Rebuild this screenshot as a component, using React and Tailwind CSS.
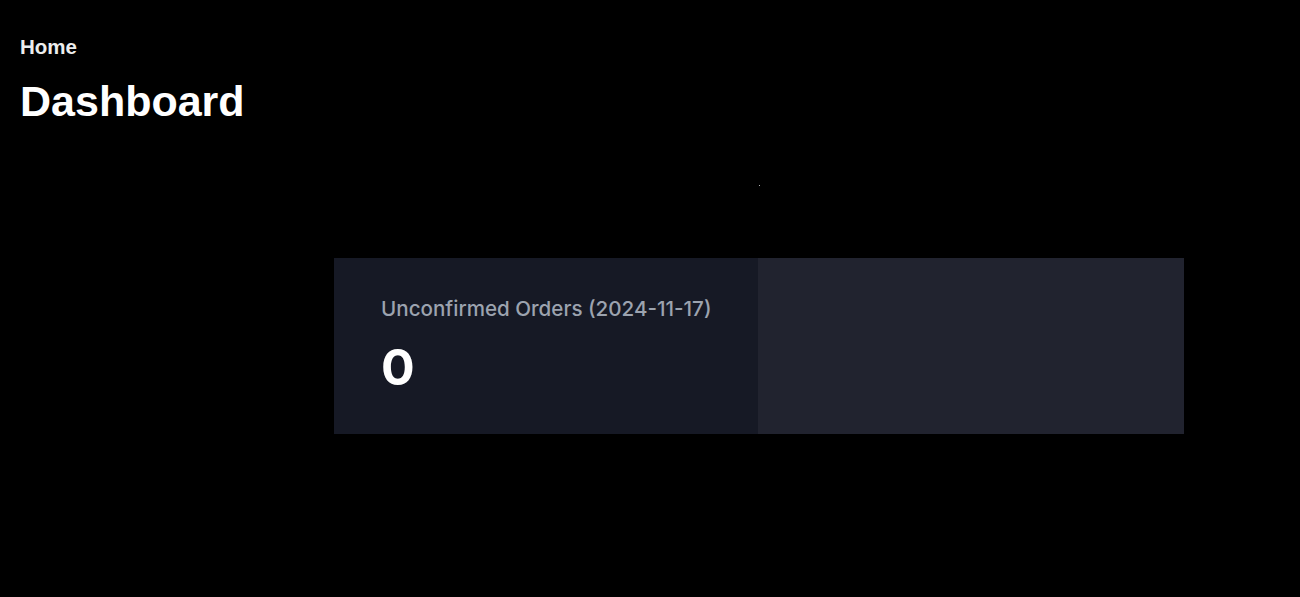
import React from "react";

function StatCard({ label, value }) {
  return (
    <div className="flex w-[850px] h-[176px]">
      <div className="w-[424px] bg-[#161925] pl-[47px] pt-[37px]">
        <p className="font-['Inter',sans-serif] text-[20.6px] leading-[28px] font-medium text-[#9ca3af]">
          {label}
        </p>
        <p className="mt-[20px] font-['Inter',sans-serif] text-[50px] leading-[48px] font-bold text-white">
          {value}
        </p>
      </div>
      <div className="flex-1 bg-[#21232f]" />
    </div>
  );
}

export default function App() {
  return (
    <div className="min-h-[597px] w-full bg-black font-['Liberation_Sans',Arial,sans-serif]">
      {/* Page header */}
      <header className="px-5 pt-[33px]">
        <div className="text-[20.5px] leading-[28px] font-semibold text-[#ededed]">Home</div>
        <h1 className="mt-[14px] text-[43px] leading-[52px] font-bold text-white">Dashboard</h1>
      </header>

      {/* Loading dot */}
      <div className="flex justify-center pl-[218px] pt-[58px]">
        <div className="w-px h-px bg-[#b5b5b5]" />
      </div>

      {/* Stats */}
      <div className="pl-[334px] pt-[72px]">
        <StatCard label="Unconfirmed Orders (2024-11-17)" value="0" />
      </div>
    </div>
  );
}
